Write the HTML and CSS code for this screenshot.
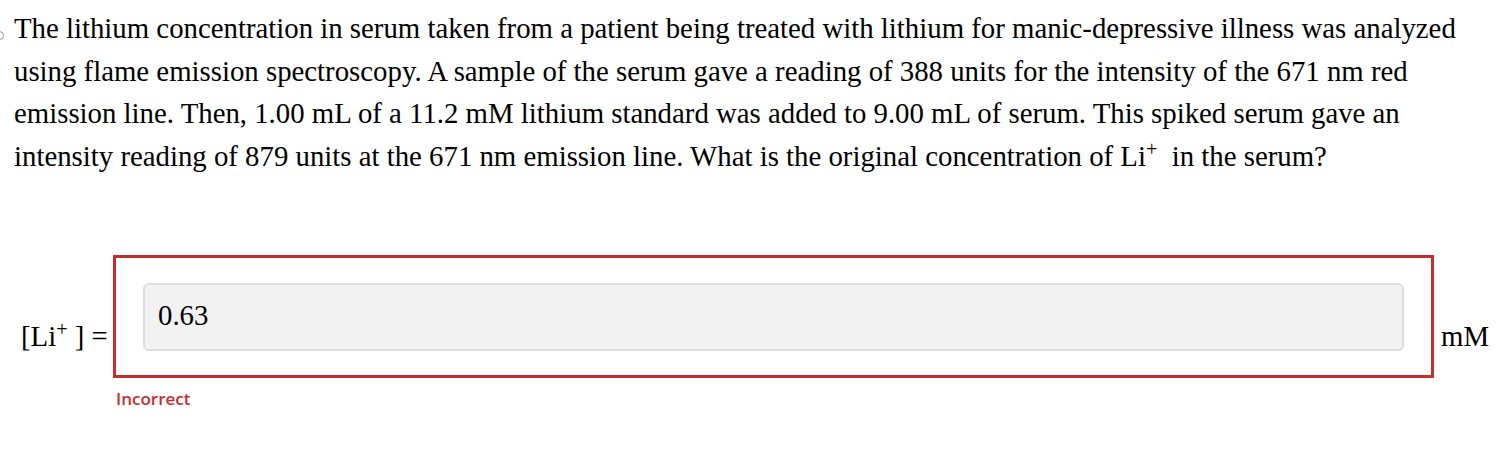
FILE: index.html
```html
<!DOCTYPE html>
<html>
<head>
<meta charset="utf-8">
<link rel="stylesheet" href="styles.css">
</head>
<body>
<div class="question">
  <span class="marker"></span>
  <p class="prompt">The lithium concentration in serum taken from a patient being treated with lithium for manic-depressive illness was analyzed using flame emission spectroscopy. A sample of the serum gave a reading of 388 units for the intensity of the 671 nm red emission line. Then, 1.00 mL of a 11.2 mM lithium standard was added to 9.00 mL of serum. This spiked serum gave an intensity reading of 879 units at the 671 nm emission line. What is the original concentration of Li<sup>+</sup>&nbsp; in the serum?</p>
</div>
<div class="answer">
  <div class="label">[Li<sup>+</sup> ] =</div>
  <div class="field">
    <div class="box">
      <div class="input">0.63</div>
    </div>
    <div class="feedback">Incorrect</div>
  </div>
  <div class="unit">mM</div>
</div>
</body>
</html>
```
FILE: styles.css
```css
html, body {
  margin: 0;
  padding: 0;
  background: #fff;
}
body {
  font-family: "Liberation Serif", "Times New Roman", serif;
  color: #000;
  width: 1506px;
  height: 450px;
  overflow: hidden;
}
.question {
  position: relative;
  padding: 7px 36px 0 14px;
}
.marker {
  position: absolute;
  left: -5px;
  top: 31px;
  width: 7px;
  height: 7px;
  border: 1.5px solid #999;
  border-radius: 50%;
}
.prompt {
  margin: 0;
  font-size: 28.8px;
  line-height: 42.6px;
}
sup {
  font-size: 0.7em;
  line-height: 0;
  vertical-align: 0.5em;
}
.answer {
  display: flex;
  align-items: flex-start;
  margin-top: 78px;
}
.label {
  width: 113px;
  box-sizing: border-box;
  padding-left: 21px;
  font-size: 28.8px;
  line-height: 1;
  padding-top: 67px;
  white-space: nowrap;
}
.field {
  width: 1321px;
}
.box {
  border: 3px solid #c62d2d;
  height: 123px;
  box-sizing: border-box;
  padding: 25px 27px 0 27px;
}
.input {
  height: 68px;
  box-sizing: border-box;
  background: #f2f2f2;
  border: 2px solid #dedede;
  border-radius: 6px;
  padding: 16px 0 0 13px;
  font-size: 28.8px;
  line-height: 1;
}
.feedback {
  font-family: "Open Sans", "Noto Sans", sans-serif;
  font-weight: 600;
  font-size: 17px;
  line-height: 1;
  color: #c62d2d;
  padding: 12px 0 0 3px;
}
.unit {
  padding: 67px 0 0 7px;
  font-size: 28.8px;
  line-height: 1;
}
```
